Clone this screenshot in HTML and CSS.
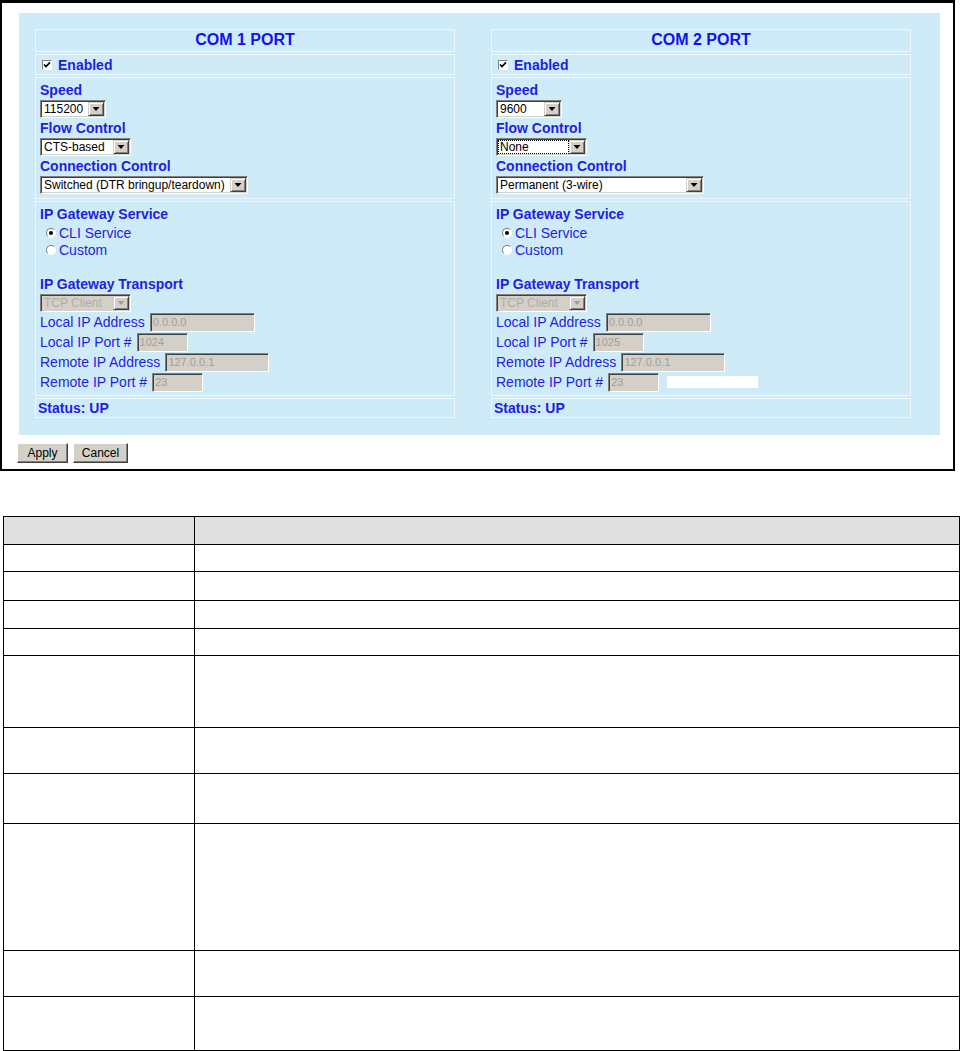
FILE: index.html
```html
<!DOCTYPE html>
<html>
    <head>
        <title>Serial Port Configuration</title>
        <link rel="stylesheet" href="styles.css">
    </head>
    <body>
        <div class="frame">
            <form class="ports">
                <div class="port">
                    <div class="cell title">COM 1 PORT</div>
                    <div class="cell enable">
                        <span class="check"><svg width="8" height="8" viewBox="0 0 8 8"><path d="M1 3.5 L3 5.6 L7 1.4" fill="none" stroke="#000" stroke-width="1.7"/></svg></span>Enabled
                    </div>
                    <div class="cell serial">
                        <div class="label">Speed</div>
                        <span class="sel w66"><select><option>115200</option></select><span class="arrow"></span></span>
                        <div class="label">Flow Control</div>
                        <span class="sel w91"><select><option>CTS-based</option></select><span class="arrow"></span></span>
                        <div class="label">Connection Control</div>
                        <span class="sel w208"><select><option>Switched (DTR bringup/teardown)</option></select><span class="arrow"></span></span>
                    </div>
                    <div class="cell gateway">
                        <div class="label">IP Gateway Service</div>
                        <div class="radio-row"><span class="radio on"></span>CLI Service</div>
                        <div class="radio-row"><span class="radio"></span>Custom</div>
                        <div class="spacer"></div>
                        <div class="label">IP Gateway Transport</div>
                        <span class="sel off w91"><select disabled><option>TCP Client</option></select><span class="arrow"></span></span>
                        <div class="field">Local IP Address <input class="w105" value="0.0.0.0" disabled></div>
                        <div class="field">Local IP Port # <input class="w51" value="1024" disabled></div>
                        <div class="field">Remote IP Address <input class="w104" value="127.0.0.1" disabled></div>
                        <div class="field">Remote IP Port # <input class="w51" value="23" disabled></div>
                    </div>
                    <div class="cell status">Status: UP</div>
                </div>
                <div class="port">
                    <div class="cell title">COM 2 PORT</div>
                    <div class="cell enable">
                        <span class="check"><svg width="8" height="8" viewBox="0 0 8 8"><path d="M1 3.5 L3 5.6 L7 1.4" fill="none" stroke="#000" stroke-width="1.7"/></svg></span>Enabled
                    </div>
                    <div class="cell serial">
                        <div class="label">Speed</div>
                        <span class="sel w66"><select><option>9600</option></select><span class="arrow"></span></span>
                        <div class="label">Flow Control</div>
                        <span class="sel w91"><select class="focus"><option>None</option></select><span class="arrow"></span></span>
                        <div class="label">Connection Control</div>
                        <span class="sel w208"><select><option>Permanent (3-wire)</option></select><span class="arrow"></span></span>
                    </div>
                    <div class="cell gateway">
                        <div class="label">IP Gateway Service</div>
                        <div class="radio-row"><span class="radio on"></span>CLI Service</div>
                        <div class="radio-row"><span class="radio"></span>Custom</div>
                        <div class="spacer"></div>
                        <div class="label">IP Gateway Transport</div>
                        <span class="sel off w91"><select disabled><option>TCP Client</option></select><span class="arrow"></span></span>
                        <div class="field">Local IP Address <input class="w105" value="0.0.0.0" disabled></div>
                        <div class="field">Local IP Port # <input class="w51" value="1025" disabled></div>
                        <div class="field">Remote IP Address <input class="w104" value="127.0.0.1" disabled></div>
                        <div class="field">Remote IP Port # <input class="w51" value="23" disabled><span class="blank"></span></div>
                    </div>
                    <div class="cell status">Status: UP</div>
                </div>
            </form>
            <div class="buttons">
                <button class="btn w51">Apply</button>
                <button class="btn w55">Cancel</button>
            </div>
        </div>
        <table class="params">
            <tr class="head h28"><th class="col1"></th><th></th></tr>
            <tr class="h27"><td></td><td></td></tr>
            <tr class="h29"><td></td><td></td></tr>
            <tr class="h28"><td></td><td></td></tr>
            <tr class="h27"><td></td><td></td></tr>
            <tr class="h72"><td></td><td></td></tr>
            <tr class="h46"><td></td><td></td></tr>
            <tr class="h50"><td></td><td></td></tr>
            <tr class="h127"><td></td><td></td></tr>
            <tr class="h46"><td></td><td></td></tr>
            <tr class="h54"><td></td><td></td></tr>
        </table>
    </body>
</html>
```

FILE: styles.css
```css
body{
    margin: 0;
    font-family: "Liberation Sans", Arial, sans-serif;
    background-color: #fff;
}
.frame{
    width: 955px;
    box-sizing: border-box;
    border: 2px solid #000;
    border-top-width: 3px;
    padding: 10px 0 6px 17px;
}
.ports{
    width: 921px;
    box-sizing: border-box;
    margin: 0;
    padding: 16px 29px 17px 16px;
    background-color: #cfebf7;

    display: flex;
    gap: 36px;
}
.port{
    width: 420px;
    display: flex;
    flex-direction: column;
    gap: 2px;
}
.cell{
    border: 1px solid #eef8fc;
    color: #1e1ee6;
}
.title{
    font-size: 16px;
    font-weight: bold;
    text-align: center;
    line-height: 19px;
    padding-bottom: 2px;
    color: #1212f0;
}
.enable{
    display: flex;
    align-items: center;
    height: 19px;
    padding-left: 6px;
    font-size: 14px;
    font-weight: bold;
}
.check{
    width: 10px;
    height: 10px;
    box-sizing: border-box;
    margin-right: 6px;
    background-color: #fff;
    border: 1px solid;
    border-color: #808080 #fff #fff #808080;

    display: flex;
    align-items: center;
    justify-content: center;
}
.serial{
    padding: 2px 4px 4px;
}
.gateway{
    padding: 2px 4px 3px;
}
.label{
    font-size: 14px;
    font-weight: bold;
    line-height: 20px;
}
.sel{
    display: flex;
    height: 18px;
    box-sizing: border-box;
    padding: 1px;
    border: 1px solid;
    border-color: #808080 #fff #fff #808080;
    box-shadow: inset 1px 1px #404040, inset -1px -1px #d4d0c8;
    background-color: #fff;
}
.sel select{
    flex: 1;
    min-width: 0;
    height: 14px;
    margin: 0;
    padding: 0 0 0 2px;
    border: none;
    border-radius: 0;
    appearance: none;
    background-color: #fff;
    font-family: "Liberation Sans", Arial, sans-serif;
    font-size: 12px;
    line-height: 14px;
    color: #000;
}
.sel select.focus{
    outline: 1px dotted #000;
    outline-offset: -1px;
}
.arrow{
    width: 16px;
    height: 14px;
    box-sizing: border-box;
    background-color: #d4d0c8;
    border: 1px solid;
    border-color: #d4d0c8 #404040 #404040 #d4d0c8;
    box-shadow: inset 1px 1px #fff, inset -1px -1px #808080;

    display: flex;
    align-items: center;
    justify-content: center;
}
.arrow::after{
    content: "";
    width: 7px;
    height: 4px;
    background-color: #000;
    clip-path: polygon(0 0, 100% 0, 50% 100%);
}
.sel.off,
.sel.off select{
    background-color: #d4d0c8;
}
.sel.off select{
    color: #a29e97;
}
.sel.off .arrow::after{
    background-color: #a29e97;
}
.radio-row{
    display: flex;
    align-items: center;
    height: 17px;
    padding-left: 6px;
    font-size: 14px;
}
.radio{
    width: 10px;
    height: 10px;
    box-sizing: border-box;
    margin-right: 3px;
    border-radius: 50%;
    background-color: #fff;
    border: 1px solid;
    border-color: #808080 #fff #fff #808080;

    display: flex;
    align-items: center;
    justify-content: center;
}
.radio.on::after{
    content: "";
    width: 4px;
    height: 4px;
    border-radius: 50%;
    background-color: #000;
}
.spacer{
    height: 16px;
}
.field{
    display: flex;
    align-items: center;
    gap: 5px;
    height: 20px;
    font-size: 14px;
    line-height: 20px;
}
.field input{
    height: 19px;
    box-sizing: border-box;
    margin: 0;
    padding: 0 2px;
    border: 1px solid;
    border-color: #808080 #fff #fff #808080;
    box-shadow: inset 1px 1px #404040;
    background-color: #d4d0c8;
    font-family: "Liberation Sans", Arial, sans-serif;
    font-size: 11px;
    color: #a29e97;
}
.blank{
    width: 91px;
    height: 12px;
    margin-left: 3px;
    background-color: #fff;
}
.status{
    padding-left: 2px;
    font-size: 14px;
    font-weight: bold;
    line-height: 18px;
}
.w51{ width: 51px; }
.w55{ width: 55px; }
.w66{ width: 66px; }
.w91{ width: 91px; }
.w104{ width: 104px; }
.w105{ width: 105px; }
.w208{ width: 208px; }
.buttons{
    display: flex;
    gap: 5px;
    margin: 8px 0 0 -2px;
}
.btn{
    height: 20px;
    padding: 0;
    background-color: #d4d0c8;
    border: 1px solid;
    border-color: #fff #404040 #404040 #fff;
    box-shadow: inset -1px -1px #808080;
    font-family: "Liberation Sans", Arial, sans-serif;
    font-size: 12px;
    color: #000;
}
.params{
    width: 957px;
    margin: 45px 0 0 3px;
    border-collapse: collapse;
}
.params th,
.params td{
    border: 1px solid #000;
    padding: 0;
}
.params .head th{
    background-color: #e0e0e0;
}
.col1{ width: 190px; }
.h27{ height: 27px; }
.h28{ height: 28px; }
.h29{ height: 29px; }
.h46{ height: 46px; }
.h50{ height: 50px; }
.h54{ height: 54px; }
.h72{ height: 72px; }
.h127{ height: 127px; }
```
